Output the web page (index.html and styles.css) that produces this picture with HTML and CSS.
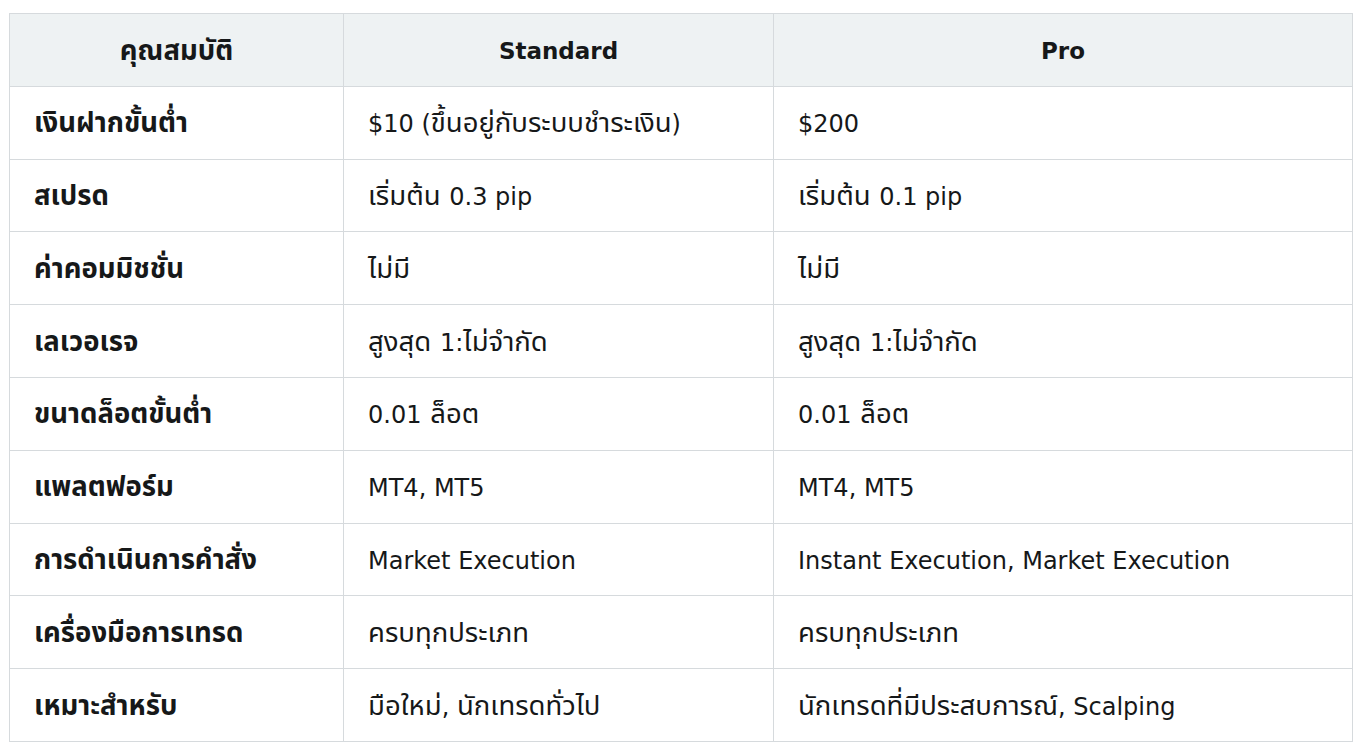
FILE: index.html
```html
<!DOCTYPE html>
<html lang="th">
<head>
<meta charset="utf-8">
<title>เปรียบเทียบบัญชี</title>
<link rel="stylesheet" href="styles.css">
</head>
<body>
<div class="wrap">
<table class="cmp">
  <colgroup>
    <col class="c1"><col class="c2"><col class="c3">
  </colgroup>
  <thead>
    <tr><th>คุณสมบัติ</th><th class="en">Standard</th><th class="en">Pro</th></tr>
  </thead>
  <tbody>
    <tr><td class="k">เงินฝากขั้นต่ำ</td><td><span class="en">$10 (</span>ขึ้นอยู่กับระบบชำระเงิน<span class="en">)</span></td><td class="en">$200</td></tr>
    <tr><td class="k">สเปรด</td><td>เริ่มต้น <span class="en">0.3 pip</span></td><td>เริ่มต้น <span class="en">0.1 pip</span></td></tr>
    <tr><td class="k">ค่าคอมมิชชั่น</td><td>ไม่มี</td><td>ไม่มี</td></tr>
    <tr><td class="k">เลเวอเรจ</td><td>สูงสุด <span class="en">1:</span>ไม่จำกัด</td><td>สูงสุด <span class="en">1:</span>ไม่จำกัด</td></tr>
    <tr><td class="k">ขนาดล็อตขั้นต่ำ</td><td><span class="en">0.01</span> ล็อต</td><td><span class="en">0.01</span> ล็อต</td></tr>
    <tr><td class="k">แพลตฟอร์ม</td><td class="en">MT4, MT5</td><td class="en">MT4, MT5</td></tr>
    <tr><td class="k">การดำเนินการคำสั่ง</td><td class="en">Market Execution</td><td class="en">Instant Execution, Market Execution</td></tr>
    <tr><td class="k">เครื่องมือการเทรด</td><td>ครบทุกประเภท</td><td>ครบทุกประเภท</td></tr>
    <tr><td class="k">เหมาะสำหรับ</td><td>มือใหม่<span class="en">, </span>นักเทรดทั่วไป</td><td>นักเทรดที่มีประสบการณ์<span class="en">, Scalping</span></td></tr>
  </tbody>
</table>
</div>
</body>
</html>
```
FILE: styles.css
```css
html, body {
  margin: 0;
  padding: 0;
  background: #ffffff;
}
.wrap {
  padding: 13px 11px 0 9px;
}
.cmp {
  width: 1344px;
  border-collapse: collapse;
  table-layout: fixed;
  font-family: "DejaVu Sans", "Noto Sans Thai", "Noto Sans", sans-serif;
  font-size: 27.5px;
  color: #161819;
}
.c1 { width: 334px; }
.c2 { width: 430px; }
.c3 { width: auto; }
.cmp th, .cmp td {
  border: 1px solid #d6dadd;
  height: 72.8px;
  padding: 0 24px;
  box-sizing: border-box;
  vertical-align: middle;
  line-height: 1.2;
  white-space: nowrap;
}
.cmp th {
  background: #eef2f3;
  font-weight: 700;
  text-align: center;
  padding-top: 2px;
}
.cmp th.en {
  font-size: 23px;
  padding-top: 4px;
}
.cmp td {
  text-align: left;
  font-weight: 400;
}
.cmp td.k {
  font-weight: 700;
}
.cmp .en {
  font-size: 24px;
}
.cmp td.en {
  padding-top: 4px;
}
```
